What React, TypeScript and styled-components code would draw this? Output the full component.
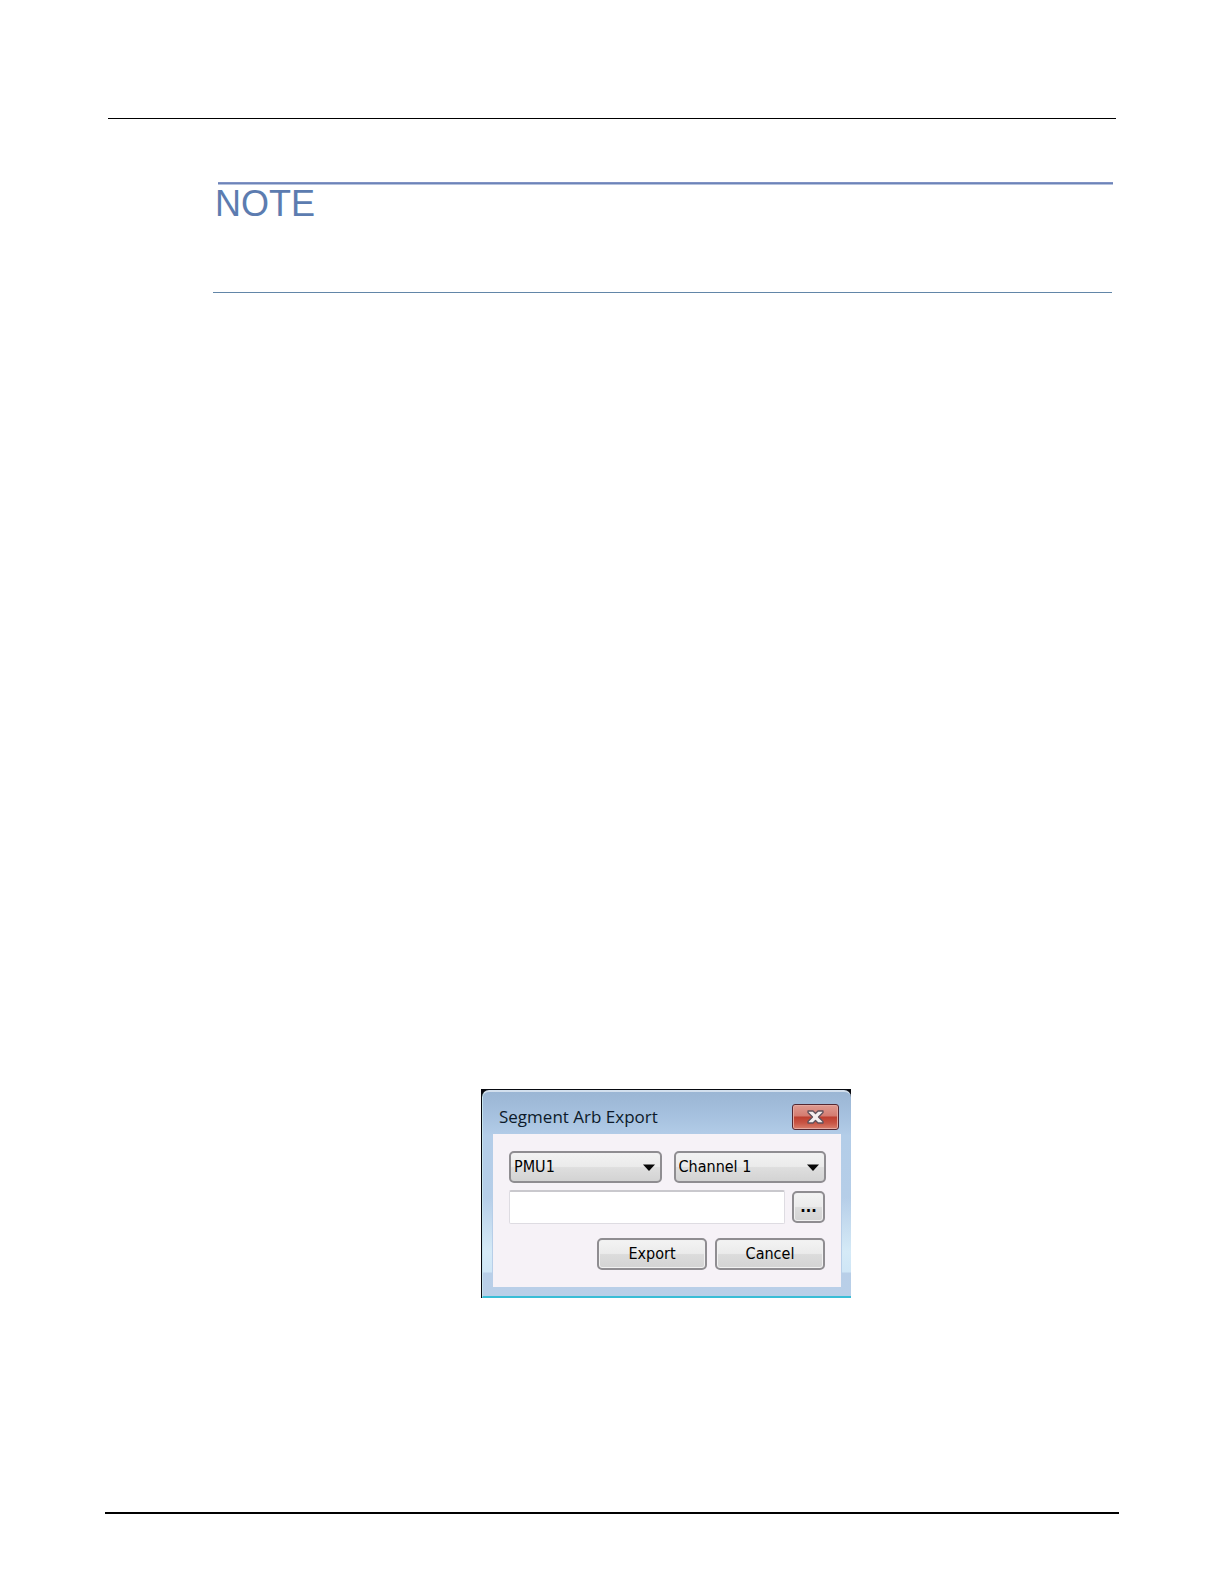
import React, { useState } from "react";
import styled, { createGlobalStyle } from "styled-components";

const GlobalStyle = createGlobalStyle`
  *, *::before, *::after { box-sizing: border-box; }
  body { margin: 0; background: #fff; }
`;

const Page = styled.div`
  display: flex;
  flex-direction: column;
  min-height: 100vh;
  padding: 118px 108px 70px;
  font-family: "Liberation Sans", Arial, sans-serif;
`;

const HeaderRule = styled.header`
  border-top: 1px solid #000;
`;

const FooterRule = styled.footer`
  margin: auto -3px 0;
  border-top: 2px solid #000;
`;

const Content = styled.main`
  display: flex;
  flex-direction: column;
  padding: 63px 0 0 108px;
`;

const Note = styled.section`
  height: 111px;
  margin: 0 4px 0 -3px;
  padding-left: 5px;
  border-bottom: 1px solid #6286a8;
`;

const NoteTitle = styled.h1`
  margin: 0 -1px 0 0;
  border-top: 3px solid #6f88bb;
  border-image: linear-gradient(#8092c4 0 1px, #6c84b8 1px 2px, #b6c2de 2px 3px) 3 0 0;
  color: #5c7cb0;
  font-size: 36px;
  font-weight: 400;
  line-height: 38px;
  text-indent: -3px;
`;

const Figure = styled.div`
  display: flex;
  justify-content: center;
  padding: 796px 0 48px;
`;

const Frame = styled.div`
  flex: 0 1 370px;
  background: #080a10;
  padding: 1px 0 0 1px;
`;

const Dialog = styled.section`
  padding: 0 10px 9px;
  border-top: 2px solid #d3e0ee;
  border-left: 1px solid #c5e4ee;
  border-bottom: 2px solid #39bdd6;
  border-radius: 7px 7px 0 0;
  background:
    linear-gradient(transparent 105px, #d5eaf7 160px, #cfe6f6 180px, transparent 181px) left / 9px 100% no-repeat,
    linear-gradient(transparent 105px, #d5eaf7 160px, #cfe6f6 180px, transparent 181px) right / 9px 100% no-repeat,
    linear-gradient(#9bb6d4, #a5c0de 22px, #b3cde8 44px, #b9cfe8);
`;

const TitleBar = styled.header`
  display: flex;
  align-items: center;
  justify-content: space-between;
  height: 42px;
  padding: 8px 2px 0 6px;
`;

const Title = styled.h2`
  margin: 0;
  color: #0c1a2a;
  font: 400 17px/24px "Open Sans", "Noto Sans", sans-serif;
`;

const CloseButton = styled.button`
  display: grid;
  place-items: center;
  width: 47px;
  height: 26px;
  padding: 0;
  border: 1px solid #542832;
  border-radius: 3px;
  background: linear-gradient(#df9b91, #d47b70 11px, #bd3e2f 12px, #c95545 18px, #d9806d);
  box-shadow: inset 0 0 0 1px #e5a9a0;
`;

const Form = styled.form`
  display: flex;
  flex-direction: column;
  gap: 7px;
  padding: 17px 15px 17px 16px;
  background: #f6f2f7;
`;

const SelectRow = styled.div`
  display: flex;
  gap: 12px;
`;

const PathRow = styled.div`
  display: flex;
  align-items: center;
  gap: 7px;
  padding-right: 1px;
`;

const ActionRow = styled.div`
  display: flex;
  justify-content: flex-end;
  gap: 8px;
  padding: 7px 1px 0 0;
`;

const SelectBox = styled.label`
  position: relative;
  flex: 1;
`;

const Select = styled.select`
  display: block;
  width: 100%;
  height: 32px;
  padding: 0 28px 0 3px;
  appearance: none;
  border: 2px solid #8f8d91;
  border-radius: 5px;
  background: linear-gradient(#f2f2f2, #ebebeb 48%, #dedede 52%, #d3d3d3);
  color: #000;
  font: 400 16px/26px "DejaVu Sans Condensed", "DejaVu Sans", sans-serif;
`;

const Arrow = styled.svg`
  position: absolute;
  top: 13px;
  right: 7px;
  pointer-events: none;
`;

const PathInput = styled.input`
  flex: 1;
  min-width: 0;
  height: 34px;
  padding: 0 6px;
  border: 1px solid #dedce2;
  border-top: 2px solid #c9c8cd;
  border-radius: 2px;
  background: #fff;
  font: 400 16px/24px "DejaVu Sans Condensed", "DejaVu Sans", sans-serif;
`;

const Button = styled.button<{ $width: number; $strong?: boolean }>`
  width: ${(p) => p.$width}px;
  height: 32px;
  padding: 0;
  border: 2px solid #8f8d91;
  border-radius: 5px;
  background: linear-gradient(#f3f3f3, #ebebeb 48%, #dcdcdc 52%, #d3d3d3);
  box-shadow: inset 0 0 0 1px #f1f1f1;
  color: #000;
  font: ${(p) => (p.$strong ? 700 : 400)} 16px/24px "DejaVu Sans Condensed", "DejaVu Sans", sans-serif;
`;

function Dropdown({ label, options }: { label: string; options: string[] }) {
  return (
    <SelectBox>
      <Select aria-label={label}>
        {options.map((option) => (
          <option key={option}>{option}</option>
        ))}
      </Select>
      <Arrow width="12" height="7" viewBox="0 0 12 7" aria-hidden="true">
        <path d="M0 0.5h12L6 7z" fill="#080808" />
      </Arrow>
    </SelectBox>
  );
}

export default function App() {
  const [path, setPath] = useState("");
  return (
    <>
      <GlobalStyle />
      <Page>
        <HeaderRule />
        <Content>
          <Note>
            <NoteTitle>NOTE</NoteTitle>
          </Note>
          <Figure>
            <Frame>
              <Dialog role="dialog" aria-labelledby="export-title">
                <TitleBar>
                  <Title id="export-title">Segment Arb Export</Title>
                  <CloseButton type="button" aria-label="Close">
                    <svg width="17" height="14" viewBox="0 0 17 14" aria-hidden="true">
                      <path
                        d="M1 1h5l2.500 2.500L11 1h5v1.500L11.500 7l4.500 4.500V13h-5L8.500 10.500 6 13H1v-1.500L5.500 7 1 2.500z"
                        fill="#f4eeee"
                        stroke="#60505a"
                        strokeWidth="1.300"
                        strokeLinejoin="round"
                      />
                    </svg>
                  </CloseButton>
                </TitleBar>
                <Form onSubmit={(e) => e.preventDefault()}>
                  <SelectRow>
                    <Dropdown label="Instrument" options={["PMU1"]} />
                    <Dropdown label="Channel" options={["Channel 1"]} />
                  </SelectRow>
                  <PathRow>
                    <PathInput
                      type="text"
                      aria-label="File path"
                      value={path}
                      onChange={(e) => setPath(e.target.value)}
                    />
                    <Button type="button" $width={33} $strong aria-label="Browse">
                      ...
                    </Button>
                  </PathRow>
                  <ActionRow>
                    <Button type="submit" $width={110}>
                      Export
                    </Button>
                    <Button type="button" $width={110}>
                      Cancel
                    </Button>
                  </ActionRow>
                </Form>
              </Dialog>
            </Frame>
          </Figure>
        </Content>
        <FooterRule />
      </Page>
    </>
  );
}
